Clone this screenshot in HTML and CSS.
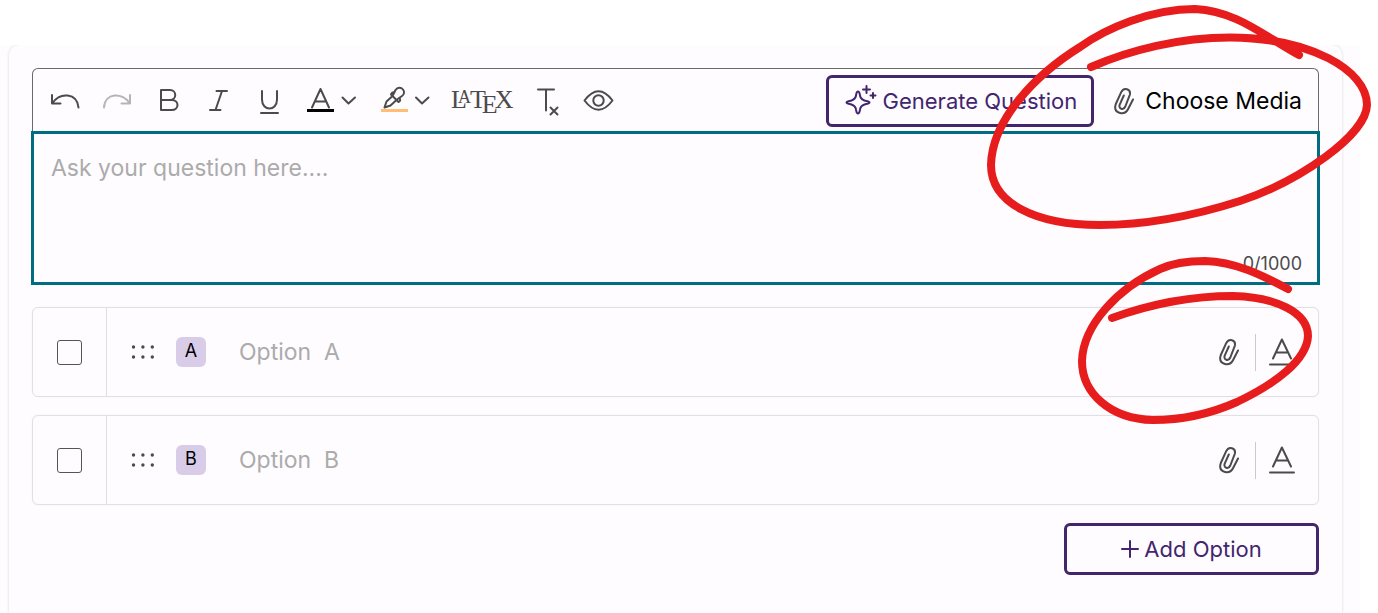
FILE: index.html
```html
<!DOCTYPE html>
<html lang="en">
<head>
<meta charset="utf-8">
<title>Question editor</title>
<link rel="stylesheet" href="styles.css">
</head>
<body>
<svg class="sprite" aria-hidden="true">
  <symbol id="clip" viewBox="0 0 22 28"><path d="M20 12.500 15 22.200C11.500 28.800 1.500 26.500 2.200 19.500L2.800 17 8.200 5.200C10.800-.5 18.200 2 16.800 7.800L12.300 19.500C10.600 23.600 5.200 22 6.700 17.600L10.800 8.500" /></symbol>
  <symbol id="letter-a" viewBox="0 0 26 28"><path d="M4 20.500 12.900 1.500 22 20.500M7 14.500H19M1 26.500H25"/></symbol>
  <symbol id="grip" viewBox="0 0 24 14"><g fill="#4b4b4b" stroke="none"><circle cx="2.500" cy="2" r="1.700"/><circle cx="11.900" cy="2" r="1.700"/><circle cx="21.300" cy="2" r="1.700"/><circle cx="2.500" cy="12" r="1.700"/><circle cx="11.900" cy="12" r="1.700"/><circle cx="21.300" cy="12" r="1.700"/></g></symbol>
</svg>
<main class="page">
  <section class="card">
    <div class="editor">
      <div class="toolbar">
        <button class="tool" type="button" aria-label="Undo"><svg class="icon" width="32" height="32" viewBox="0 0 32 32"><path d="M3 11V19.500H11.500M3.500 19C11 8 28 8.500 29.500 23.500"/></svg></button>
        <button class="tool" type="button" aria-label="Redo" disabled><svg class="icon" width="32" height="32" viewBox="0 0 32 32"><path d="M29 11V19.500H20.500M28.500 19C21 8 4 8.500 3 23.500"/></svg></button>
        <button class="tool" type="button" aria-label="Bold"><svg class="icon" width="32" height="32" viewBox="0 0 32 32"><path d="M8 6H17C24 6 24 16 17 16H8ZM8 16H18.500C26.500 16 26.500 26 18.500 26H8Z"/></svg></button>
        <button class="tool" type="button" aria-label="Italic"><svg class="icon" width="28" height="32" viewBox="0 0 28 32"><path d="M11.500 7H22M5 26H15.500M17 7 10.500 26"/></svg></button>
        <button class="tool" type="button" aria-label="Underline"><svg class="icon" width="34" height="32" viewBox="0 0 34 32"><path d="M9 7V15.500C9 27.500 24 27.500 24 15.500V7M8 29H25"/></svg></button>
        <button class="tool" type="button" aria-label="Text color"><svg class="icon" width="50" height="32" viewBox="0 0 50 32"><path d="M5 23.500 13.500 5 22 23.500M8 17.500H19M35.500 13.500 41.500 19.500 48 13.500"/><path class="ink" d="M0 26.500H27"/></svg></button>
        <button class="tool" type="button" aria-label="Highlight color"><svg class="icon" width="54" height="32" viewBox="0 0 54 32"><path d="M15 12.500 9.500 17.500 7.500 23.500 13.500 21.500 19.500 16M14 10.500 21.500 18M15.500 12 18.500 6C20.500 3 24 3 26 5.500 28 8 27 10.500 25 12L20 15.500M14 10.500C14.500 8.500 16 8 17.500 8.500M21.500 18C23.500 17.500 23.500 15.500 22.500 14M39 13.500 45 19.500 51.500 13.500"/><path class="peach" d="M4 26.500H31"/></svg></button>
        <button class="tool latex" type="button" aria-label="LaTeX formula"><span>L</span><span class="latex-a">A</span><span class="latex-t">T</span><span class="latex-e">E</span><span class="latex-x">X</span></button>
        <button class="tool" type="button" aria-label="Clear formatting"><svg class="icon" width="30" height="32" viewBox="0 0 30 32"><path d="M5 5.500H21M13 5.500V26.500M17.500 23.500 24.500 30.500M24.500 23.500 17.500 30.500"/></svg></button>
        <button class="tool" type="button" aria-label="Preview"><svg class="icon" width="32" height="32" viewBox="0 0 32 32"><path d="M1.500 16.500Q15.500-2 29.500 16.500 15.500 35 1.500 16.500Z"/><circle cx="15.500" cy="16.500" r="5.200"/></svg></button>
        <div class="actions">
          <button class="outlined generate" type="button"><svg class="icon" width="32" height="32" viewBox="0 0 32 32"><path d="M13 6.500C14.500 6.500 14.500 8 15 10.500 15.500 13.500 16.500 14.500 19.500 15.500 22.500 16.300 24.500 16.500 24.500 17.500 24.500 18.500 22.500 18.700 19.500 19.500 16.500 20.500 15.500 21.500 15 24.500 14.500 27 14.500 28.500 13 28.500 11.500 28.500 11.500 27 11 24.500 10.500 21.500 9.500 20.500 6.500 19.500 3.500 18.700 1.500 18.500 1.500 17.500 1.500 16.500 3.500 16.300 6.500 15.500 9.500 14.500 10.500 13.500 11 10.500 11.500 8 11.500 6.500 13 6.500ZM21.500 1V8M18 4.500H25M28 8V13M25.500 10.500H30.500"/></svg>Generate Question</button>
          <button class="tool media" type="button"><svg class="icon" width="22" height="28"><use href="#clip"/></svg>Choose Media</button>
        </div>
      </div>
      <div class="question">
        <textarea class="question-input" rows="3" aria-label="Question" placeholder="Ask your question here...."></textarea>
        <span class="counter">0/1000</span>
      </div>
    </div>
    <div class="options">
      <div class="option">
        <label class="pick"><input class="check" type="checkbox" aria-label="Mark option A correct"></label>
        <svg class="grip" width="24" height="14"><use href="#grip"/></svg>
        <span class="badge">A</span>
        <input class="answer" type="text" aria-label="Option A" placeholder="Option&nbsp;&nbsp;A">
        <button class="tool" type="button" aria-label="Attach media to option A"><svg class="icon" width="22" height="28"><use href="#clip"/></svg></button>
        <span class="rule"></span>
        <button class="tool" type="button" aria-label="Format option A"><svg class="icon" width="26" height="28"><use href="#letter-a"/></svg></button>
      </div>
      <div class="option">
        <label class="pick"><input class="check" type="checkbox" aria-label="Mark option B correct"></label>
        <svg class="grip" width="24" height="14"><use href="#grip"/></svg>
        <span class="badge">B</span>
        <input class="answer" type="text" aria-label="Option B" placeholder="Option&nbsp;&nbsp;B">
        <button class="tool" type="button" aria-label="Attach media to option B"><svg class="icon" width="22" height="28"><use href="#clip"/></svg></button>
        <span class="rule"></span>
        <button class="tool" type="button" aria-label="Format option B"><svg class="icon" width="26" height="28"><use href="#letter-a"/></svg></button>
      </div>
      <button class="outlined add" type="button"><svg class="icon" width="18" height="18" viewBox="0 0 18 18"><path d="M9 1V17M1 9H17"/></svg>Add Option</button>
    </div>
  </section>
</main>
<svg class="marks" width="400" height="440" viewBox="978 0 400 440" aria-hidden="true">
  <path d="M1091 67C1130 50 1180 37.500 1230 37.500C1310 38 1367 70 1367 105C1366 135 1300 181 1240 201C1190 217 1140 225 1100 225C1035 225 991 203 991 165C992 120 1035 75 1080 47C1105 29 1150 9 1195 9C1235 11 1260 33 1299 55"/>
  <path d="M1112 318C1145 306 1187 296 1233 296C1275 297 1308 312 1308 336C1307 360 1275 384 1237 402C1210 414 1180 420 1153 420C1110 419 1082 393 1082 361C1083 325 1118 288 1160 269C1175 262 1190 261 1205 261C1235 262 1260 274 1288 289"/>
</svg>
</body>
</html>
```
FILE: styles.css
```css
* { box-sizing: border-box; }
body {
  margin: 0;
  position: relative;
  min-height: 100vh;
  display: flex;
  background: #fff;
  font-family: Inter, "Liberation Sans", sans-serif;
  font-size: 23px;
  line-height: 28px;
  color: #4b4b4b;
  overflow: hidden;
}
button, input, textarea { font: inherit; color: inherit; }
.sprite { position: absolute; width: 0; height: 0; }
.page {
  flex: 1;
  margin: 45px 18px 0 0;
  padding: 0 18px 0 9px;
  background: #fefcff;
  display: flex;
}
.card {
  flex: 1;
  min-width: 0;
  padding: 23px;
  border-radius: 10px 10px 0 0;
  box-shadow: 0 0 3px #d8d5dc;
  clip-path: inset(0 -4px 0 -4px);
}
.toolbar {
  display: flex;
  align-items: center;
  gap: 20px;
  height: 63px;
  padding: 0 16px;
  border: 1px solid #6a6a6a;
  border-bottom: 0;
  border-radius: 6px 6px 0 0;
}
.tool {
  display: flex;
  align-items: center;
  padding: 0;
  border: 0;
  background: none;
}
.tool:disabled { opacity: .4; }
.icon {
  flex: none;
  fill: none;
  stroke: #4b4b4b;
  stroke-width: 2;
  stroke-linecap: round;
  stroke-linejoin: round;
}
.icon .ink { stroke: #000; stroke-width: 3; stroke-linecap: butt; }
.icon .peach { stroke: #ffbd75; stroke-width: 3; stroke-linecap: butt; }
.latex {
  width: 62px;
  height: 32px;
  font-family: "Liberation Serif", serif;
  font-size: 26px;
}
.latex-a { font-size: 18px; margin: 0 0 6px -9px; }
.latex-t { margin-left: -1px; }
.latex-e { margin: 10px 0 0 -4px; }
.latex-x { margin-left: -3px; }
.actions {
  display: flex;
  align-items: center;
  gap: 19px;
  margin-left: auto;
  padding-top: 2px;
}
.outlined {
  display: flex;
  align-items: center;
  justify-content: center;
  height: 52px;
  border: 3px solid #43256e;
  border-radius: 6px;
  background: none;
  color: #43256e;
  font-size: 22px;
}
.outlined .icon { stroke: #43256e; }
.generate { padding: 0 14px 0 16px; gap: 6px; white-space: nowrap; }
.media { gap: 10px; color: #000; white-space: nowrap; }
.question {
  display: flex;
  flex-direction: column;
  margin: 0 -1px;
  height: 154px;
  padding: 20px 15px 4px 17px;
  border: 3px solid #006d82;
}
.question-input {
  flex: 1;
  padding: 0;
  border: 0;
  outline: 0;
  resize: none;
  background: none;
}
.question-input::placeholder, .answer::placeholder { color: #ababab; opacity: 1; }
.counter { align-self: flex-end; font-size: 18px; line-height: 28px; }
.options {
  display: flex;
  flex-direction: column;
  gap: 18px;
  margin-top: 22px;
}
.option {
  display: flex;
  align-items: center;
  height: 90px;
  padding-right: 23px;
  border: 1px solid #e2e0e4;
  border-radius: 6px;
  box-shadow: 0 0 1px #dddbe0;
}
.pick {
  align-self: stretch;
  display: flex;
  align-items: center;
  justify-content: center;
  width: 74px;
  border-right: 1px solid #e1dfe3;
}
.check {
  appearance: none;
  width: 25px;
  height: 25px;
  margin: 0;
  border: 1px solid #555;
  border-radius: 3px;
}
.grip { margin: 0 21px 0 24px; }
.badge {
  width: 30px;
  height: 30px;
  border-radius: 6px;
  background: #d9cce8;
  color: #000;
  font-size: 18px;
  text-align: center;
}
.answer {
  flex: 1;
  min-width: 0;
  margin-left: 33px;
  padding: 0;
  border: 0;
  outline: 0;
  background: none;
}
.rule { width: 1px; height: 37px; margin: 0 13px 0 15px; background: #cbc9cd; }
.add { align-self: flex-end; width: 255px; gap: 5px; }
.marks {
  position: absolute;
  top: 0;
  right: 0;
  pointer-events: none;
  fill: none;
  stroke: #e71d1d;
  stroke-width: 8;
  stroke-linecap: round;
}
```
